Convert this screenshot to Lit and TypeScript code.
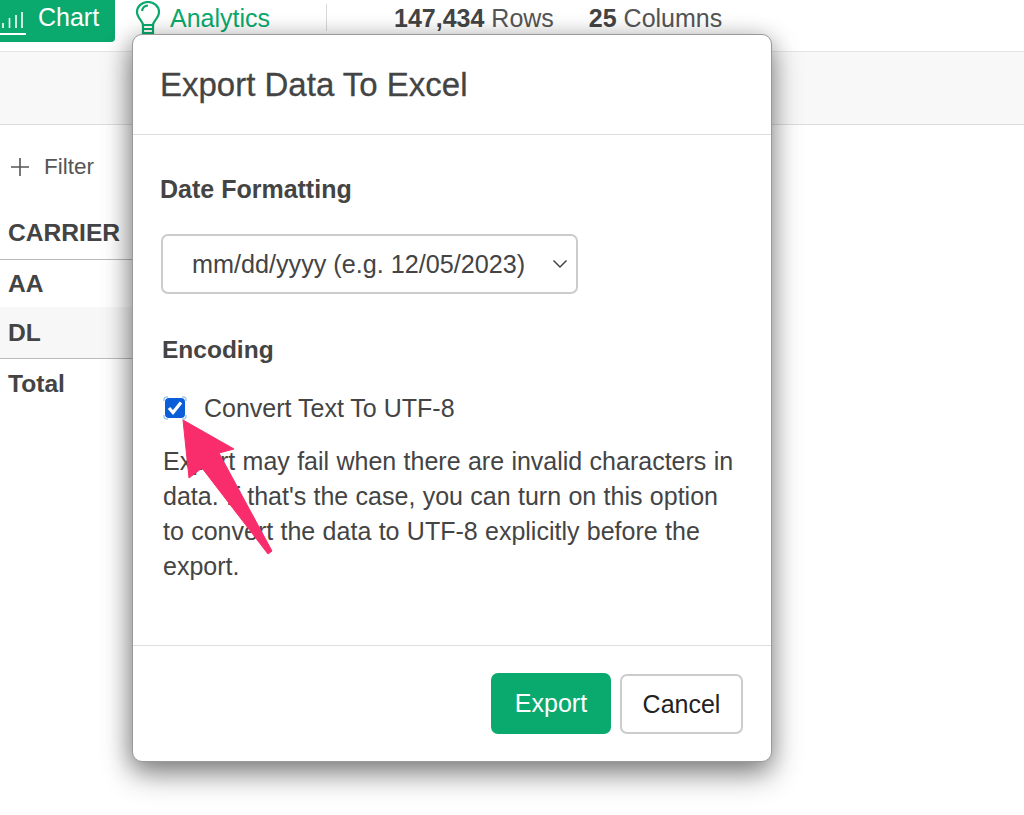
import { LitElement, html, css, svg } from "lit";
import { customElement } from "lit/decorators.js";

@customElement("app-root")
export class AppRoot extends LitElement {
  static styles = css`
    :host { display: block; position: relative; height: 815px; overflow: hidden; background: #fff;
      font-family: "Liberation Sans", Arial, sans-serif; color: #444; }
    * { box-sizing: border-box; }
    .top { height: 52px; display: flex; align-items: flex-start; border-bottom: 1px solid #e6e6e6; }
    .chart { width: 115px; height: 42px; background: #0aa96d; color: #fff; border-radius: 0 0 4px 0;
      display: flex; align-items: center; gap: 11px; font-size: 25px; padding-bottom: 7px; flex: none; }
    .chart svg { flex: none; margin-top: 7px; }
    .analytics { display: flex; align-items: center; height: 36px; margin-left: 20px; gap: 9px; color: #0aa96d; font-size: 25px; flex: none; width: 191px; }
    .sep { width: 1px; height: 27px; margin-top: 4px; background: #d8d8d8; flex: none; }
    .stats { display: flex; gap: 35px; margin-left: 67px; font-size: 25px; height: 36px; align-items: center; color: #555; white-space: nowrap; }
    .stats b { color: #444; }
    .band { height: 73px; background: #f8f8f8; border-bottom: 1px solid #ddd; }
    .filter { display: flex; align-items: center; gap: 14px; height: 84px; padding: 0 0 0 10px; font-size: 22.5px; color: #555; }
    .tbl { width: 132px; font-size: 24.6px; font-weight: 700; color: #444; }
    .tbl div { padding-left: 8px; display: flex; align-items: center; white-space: nowrap; overflow: hidden; }
    .h { height: 51px; border-bottom: 1px solid #bbb; padding-bottom: 2px; }
    .aa { height: 47px; }
    .dl { height: 52px; background: #f7f7f7; border-bottom: 1px solid #bbb; }
    .t { height: 52px; padding-bottom: 2px; }
    .modal { position: absolute; left: 132px; top: 34px; width: 640px; height: 728px; background: #fff;
      border: 1px solid #999; border-radius: 10px; display: flex; flex-direction: column;
      box-shadow: 0 12px 30px rgba(0,0,0,.42), -2px 4px 22px rgba(0,0,0,.22); }
    .mh { height: 100px; border-bottom: 1px solid #ddd; padding-left: 27px; display: flex; align-items: center; flex: none; }
    .mh h2 { margin: 0; font-size: 33px; font-weight: 400; color: #444; -webkit-text-stroke: 0.3px #444; }
    .mb { flex: 1; padding: 0 28px; }
    .lab { font-weight: 700; color: #444; }
    .l1 { margin: 40px 0 0 -1px; line-height: 28px; font-size: 25px; }
    .sel { margin-top: 31px; width: 417px; height: 60px; border: 2px solid #ccc; border-radius: 7px; display: flex;
      align-items: center; justify-content: space-between; padding: 0 8px 0 29px; font-size: 25.2px; color: #444; white-space: nowrap; }
    .l2 { margin: 42px 0 0 1px; line-height: 28px; font-size: 24.5px; }
    .chk { display: flex; align-items: center; gap: 17px; margin-top: 30px; font-size: 25px; height: 28px; padding-left: 2px; }
    .chk svg { flex: none; }
    .desc { margin: 22px 0 0 2px; font-size: 25px; line-height: 35px; color: #444; width: 572px; word-spacing: 0.4px; }
    .mf { height: 116px; border-top: 1px solid #ddd; flex: none; display: flex; justify-content: flex-end; gap: 9px; padding: 27px 28px 0 0; }
    .btn { height: 61px; border-radius: 7px; font-size: 25px; display: flex; align-items: center; justify-content: center; }
    .ok { width: 120px; background: #0aa96d; color: #fff; }
    .no { width: 123px; border: 2px solid #ccc; color: #222; background: #fff; height: 60px; margin-top: 1px; }
    .arrow { position: absolute; left: 0; top: 0; pointer-events: none; }
  `;
  render() {
    return html`
      <div class="top">
        <div class="chart">
          <svg width="27" height="30" viewBox="0 0 27 30" fill="none" stroke="#fff" stroke-width="1.6">
            <path d="M3 22v-5M9.500 22v-10M16 22v-13M22 22v-16"/><path d="M0 28h26" stroke-width="2"/>
          </svg>
          <span>Chart</span>
        </div>
        <div class="analytics">
          <svg width="26" height="34" viewBox="0 0 26 34" fill="none" stroke="#0aa96d" stroke-width="2.200">
            <path d="M8 24c0-4-6-7-6-13a11 10 0 0 1 22 0c0 6-6 9-6 13z"/>
            <path d="M7 10a6.500 6.500 0 0 1 6-5.500"/>
            <path d="M8 24v8h10v-8M8 28h10"/>
          </svg>
          <span>Analytics</span>
        </div>
        <div class="sep"></div>
        <div class="stats"><span><b>147,434</b> Rows</span><span><b>25</b> Columns</span></div>
      </div>
      <div class="band"></div>
      <div class="filter">
        <svg width="20" height="20" viewBox="0 0 20 20" stroke="#555" stroke-width="1.6"><path d="M10 1v18M1 10h18"/></svg>
        <span>Filter</span>
      </div>
      <div class="tbl">
        <div class="h">CARRIER</div>
        <div class="aa">AA</div>
        <div class="dl">DL</div>
        <div class="t">Total</div>
      </div>
      <div class="modal">
        <div class="mh"><h2>Export Data To Excel</h2></div>
        <div class="mb">
          <div class="lab l1">Date Formatting</div>
          <div class="sel"><span>mm/dd/yyyy (e.g. 12/05/2023)</span>
            <svg width="16" height="10" viewBox="0 0 16 10" fill="none" stroke="#444" stroke-width="1.5"><path d="M1.5 1.5L8 8l6.5-6.5"/></svg>
          </div>
          <div class="lab l2">Encoding</div>
          <div class="chk">
            <svg width="24" height="24" viewBox="0 0 24 24" fill="none">
              <path d="M1 5V3a2 2 0 0 1 2-2h2M19 1h2a2 2 0 0 1 2 2v2M23 19v2a2 2 0 0 1-2 2h-2M5 23H3a2 2 0 0 1-2-2v-2" stroke="#7db0f0" stroke-width="1"/>
              <rect x="2" y="2" width="20" height="20" rx="4" fill="#0a5fd8"/>
              <path d="M6 12l4 4.500 8-10" stroke="#fff" stroke-width="3.200"/>
            </svg>
            <span>Convert Text To UTF-8</span>
          </div>
          <p class="desc">Export may fail when there are invalid characters in data. If that's the case, you can turn on this option to convert the data to UTF-8 explicitly before the export.</p>
        </div>
        <div class="mf">
          <div class="btn ok">Export</div>
          <div class="btn no">Cancel</div>
        </div>
      </div>
      <svg class="arrow" width="1024" height="815" viewBox="0 0 1024 815">
        ${svg`<path d="M183 420L234 449L219 453L272 551L268 554L202 468L189 478Z" fill="#f92d6c" stroke="#f92d6c" stroke-width="1" stroke-linejoin="round"/>`}
      </svg>
    `;
  }
}
